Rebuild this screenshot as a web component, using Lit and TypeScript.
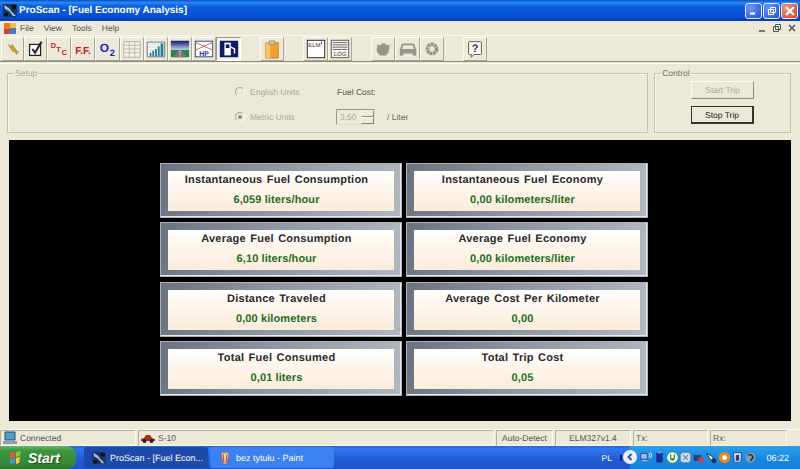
import { LitElement, html, css, svg } from "lit";
import { customElement } from "lit/decorators.js";

const cards = [
  ["Instantaneous Fuel Consumption", "6,059 liters/hour"],
  ["Instantaneous Fuel Economy", "0,00 kilometers/liter"],
  ["Average Fuel Consumption", "6,10 liters/hour"],
  ["Average Fuel Economy", "0,00 kilometers/liter"],
  ["Distance Traveled", "0,00 kilometers"],
  ["Average Cost Per Kilometer", "0,00"],
  ["Total Fuel Consumed", "0,01 liters"],
  ["Total Trip Cost", "0,05"],
];

const appIcon = svg`<path d="M1 2h14v13H1z" fill="#1c3560"/><path d="M2 3l5 3 2 3 5 5-3 0-4-5-4-2z" fill="#9fc4e8"/><path d="M10 3h4v4h-4zM2 11h4v3H2z" fill="#101010"/>`;

const icons: Record<string, unknown> = {
  bolt: svg`<path d="M7 7l4 3 0-3 5 7 2 1-1 1-1 2-3-5-1 2z" fill="#d8a818" stroke="#7a6a20" stroke-width=".6"/>`,
  check: svg`<rect x="5" y="7" width="12" height="12" fill="#fff" stroke="#222" stroke-width="1.4"/><path d="M8 12l3 4 7-12" fill="none" stroke="#222" stroke-width="2.2"/>`,
  dtc: svg`<g font-family="Liberation Sans, sans-serif" font-weight="700" fill="#d81818"><text x="3" y="11" font-size="8">D</text><text x="9" y="15" font-size="8">T</text><text x="15" y="19" font-size="8">C</text></g>`,
  ff: svg`<text x="12" y="17" text-anchor="middle" font-family="Liberation Sans, sans-serif" font-weight="700" font-size="11" fill="#c81818">F.F.</text>`,
  o2: svg`<g font-family="Liberation Sans, sans-serif" font-weight="700" fill="#1426b8"><text x="3" y="15" font-size="13">O</text><text x="14" y="20" font-size="10">2</text></g>`,
  table: svg`<path d="M3 4h18v17H3z" fill="#f4f2e8" stroke="#b0b0a8"/><path d="M3 8h18M3 12h18M3 16h18M9 4v17M15 4v17" stroke="#b8b8b0" fill="none"/>`,
  chart: svg`<path d="M2.500 4.500h19v16h-19z" fill="#f6f8f8" stroke="#6a7078"/><path d="M4 7h16M4 10h16M4 13h16" stroke="#c4ccd0" stroke-width=".7"/><path d="M5 16h2v4H5zM8 14h2v6H8zM11 12h2v8h-2zM14 9h2v11h-2zM17 6h3v14h-3z" fill="#1f7f8f"/>`,
  road: svg`<defs><linearGradient id="sky" x1="0" x2="0" y1="0" y2="1"><stop offset="0" stop-color="#10186c"/><stop offset="1" stop-color="#c4d0ec"/></linearGradient></defs><path d="M2 3h20v10H2z" fill="url(#sky)"/><path d="M2 13h20v8H2z" fill="#2e8448"/><path d="M10 13h4l5 8H5z" fill="#74787c"/><path d="M12 14v7" stroke="#eee" stroke-dasharray="2 1"/>`,
  hp: svg`<rect x="2.500" y="3.500" width="19" height="17" fill="#fff" stroke="#30406c"/><path d="M3 5l18 8M21 5L3 13" stroke="#c85050"/><text x="12" y="19.500" text-anchor="middle" font-family="Liberation Sans, sans-serif" font-weight="700" font-size="7.500" fill="#1c2c9c">HP</text>`,
  pump: svg`<rect x="2" y="3" width="20" height="18" fill="#0c1c64"/><path d="M7 5h7v14H7z" fill="#fff"/><path d="M8.500 7h4v4h-4z" fill="#0c1c64"/><path d="M14 10l4 2v5" fill="none" stroke="#fff" stroke-width="1.500"/>`,
  clip: svg`<path d="M5 5h14v17H5z" fill="#f0a030" stroke="#b87818" stroke-width=".7"/><path d="M5 5h5v17H5z" fill="#f8c468"/><path d="M9 3h6v4H9z" fill="#c8c4b4" stroke="#807c70" stroke-width=".6"/>`,
  elm: svg`<rect x="2.500" y="2.500" width="19" height="19" fill="#fff" stroke="#222"/><text x="3.500" y="9.500" font-family="Liberation Sans, sans-serif" font-size="6.500" fill="#333">ELM</text><path d="M18 4v3" stroke="#333"/>`,
  log: svg`<rect x="2.500" y="2.500" width="19" height="19" fill="#f4f2ea" stroke="#555"/><path d="M4 5h16M4 7.500h16M4 10h16M4 12.500h16" stroke="#666"/><text x="12" y="20" text-anchor="middle" font-family="Liberation Sans, sans-serif" font-size="6.500" fill="#444">LOG</text>`,
  engine: svg`<path d="M6 7l3 1 2-2h3l2 2 3-1 0 5-1 1v3l-3 3H9l-3-3-1-3z" fill="#95958a"/>`,
  car: svg`<path d="M3 13l2-6q1-1 3-1h8q2 0 3 1l2 6v6h-4v-2H7v2H3z" fill="#95958a"/><path d="M7 8h10l1.500 4h-13z" fill="#ece9d8"/>`,
  gear: svg`<circle cx="12" cy="12" r="5" fill="none" stroke="#95958a" stroke-width="4" stroke-dasharray="3 .6"/>`,
  help: svg`<path d="M6 4h12q1 0 1 1v12q0 1-1 1h-7l-3 3v-3H6q-1 0-1-1V5q0-1 1-1z" fill="#f8f8f4" stroke="#555"/><text x="12" y="15.500" text-anchor="middle" font-family="Liberation Sans, sans-serif" font-weight="700" font-size="12" fill="#333">?</text>`,
};

const groups = [
  [["bolt", 23], ["check", 23], ["dtc", 24], ["ff", 24], ["o2", 25], ["table", 24], ["chart", 24], ["road", 24], ["hp", 24], ["pump", 25]],
  [["clip", 24]],
  [["elm", 25], ["log", 24]],
  [["engine", 24], ["car", 25], ["gear", 24]],
  [["help", 24]],
];

const trayIcons = [
  svg`<path d="M1 3h8v7H1z" fill="#9cc0ec" stroke="#24408c"/><path d="M3 12h6" stroke="#dde"/><path d="M11 3q2 2 0 5M13 2q3 3 0 7" stroke="#fff" fill="none"/>`,
  svg`<rect x="4" y="2" width="8" height="12" rx="1" fill="#1c2ca0"/><path d="M6 1h4v2H6z" fill="#8898dc"/>`,
  svg`<circle cx="8" cy="8" r="7" fill="#f4f8f0" stroke="#2a9038"/><path d="M5 4v5q0 3 3 3t3-3V4H9.500v5H6.500V4z" fill="#2a9038"/>`,
  svg`<rect x="2" y="2" width="12" height="12" rx="3" fill="#d4e0f0" stroke="#7490c0"/><path d="M5 5l6 6M11 5l-6 6" stroke="#6888bc" stroke-width="1.500"/>`,
  svg`<path d="M2 5h9v7H2z" fill="#283c80"/><path d="M8 8h6v6H8z" fill="#d04040"/>`,
  svg`<path d="M2 3l6 3 3 4-4 1z" fill="#f4f4f4" stroke="#222"/><circle cx="11" cy="12" r="3" fill="#283058"/>`,
  svg`<circle cx="8" cy="8" r="7" fill="#e88820"/><circle cx="8" cy="8" r="3" fill="#fff"/>`,
  svg`<path d="M3 2h10v3l-1 9H4L3 5z" fill="#c8d4f0" stroke="#283c80"/><path d="M6 5h4v7H6z" fill="#283c80"/>`,
  svg`<circle cx="8" cy="8" r="6" fill="#8a98a8"/><path d="M5 5q5-2 6 3l-3 4" stroke="#23304c" stroke-width="2" fill="none"/>`,
];

@customElement("app-root")
export class AppRoot extends LitElement {
  static styles = css`
    :host {
      display: flex;
      flex-direction: column;
      width: 800px;
      height: 469px;
      overflow: hidden;
      background: #ece9d8;
      color: #222;
      font: 8.500px "Liberation Sans", Arial, sans-serif;
      text-rendering: geometricPrecision;
    }
    .titlebar {
      height: 21px;
      flex: none;
      display: flex;
      align-items: center;
      padding: 0 2px 0 2px;
      color: #fff;
      font-size: 10px;
      font-weight: 700;
      background: linear-gradient(180deg, #0a4fc8 0, #2a86f0 12%, #0a5fe0 30%, #0650d8 75%, #0a3cb0 100%);
    }
    .titlebar svg { margin-right: 1px; }
    .title-text { flex: 1; }
    .win-btns { display: flex; gap: 1px; }
    .win-btn {
      width: 17px;
      height: 16px;
      box-sizing: border-box;
      border: 1px solid #e8eefc;
      border-radius: 3px;
      background: radial-gradient(circle at 30% 30%, #6e98f0, #2050d0);
      display: flex;
      align-items: center;
      justify-content: center;
    }
    .win-btn svg { margin: 0; }
    .win-btn.close { background: radial-gradient(circle at 30% 30%, #ec9a80, #d04020); }
    .menubar {
      height: 15px;
      box-sizing: border-box;
      flex: none;
      display: flex;
      align-items: center;
      padding: 0 0 0 4px;
      gap: 10px;
      color: #555;
      border-bottom: 1px solid #f8f6ec;
    }
    .menu-icon { margin-right: -6px; }
    .mdi-btns {
      margin-left: auto;
      display: flex;
      gap: 5px;
      padding-right: 3px;
    }
    .toolbar {
      height: 26px;
      flex: none;
      box-sizing: border-box;
      display: flex;
      padding: 1px 0 0 1px;
      gap: 19px;
      border-bottom: 1px solid #8f8c7c;
    }
    .tb-group { display: flex; }
    .tb-btn {
      height: 24px;
      box-sizing: border-box;
      display: flex;
      align-items: center;
      justify-content: center;
      border: 1px solid;
      border-color: #fbfaf4 #a8a590 #a8a590 #fbfaf4;
    }
    .tb-btn svg { flex: none; }
    .tb-btn.pressed {
      border-color: #9c9988 #fff #fff #9c9988;
      background: #f5f3e8;
    }
    .top {
      flex: none;
      display: flex;
      gap: 6px;
      margin-top: 1px;
      padding: 4px 9px 0 7px;
      height: 76px;
      box-sizing: border-box;
      border-top: 1px solid #fbfaf2;
    }
    fieldset {
      margin: 0;
      padding: 0;
      min-width: 0;
      height: 65px;
      box-sizing: border-box;
      border: 1px solid #c5c2ae;
      box-shadow: inset 1px 1px #f8f6ec;
    }
    legend {
      margin-left: 6px;
      padding: 0 1px;
      line-height: 10px;
      color: #6a6a60;
    }
    .setup { width: 642px; }
    .setup legend { color: #a8a698; }
    .setup-grid {
      display: grid;
      grid-template-columns: 15px 87px max-content;
      grid-auto-rows: 25px;
      align-items: center;
      padding: 1px 0 0 227px;
      color: #aaa89a;
    }
    .radio {
      width: 10px;
      height: 10px;
      box-sizing: border-box;
      border-radius: 50%;
      border: 1px solid #a8a698;
      border-right-color: #f8f6ec;
      border-bottom-color: #f8f6ec;
      background: #ece9d8;
      display: flex;
      align-items: center;
      justify-content: center;
    }
    .radio i { width: 4px; height: 4px; border-radius: 50%; background: #8c8a7c; }
    .fuel { color: #555; }
    .liter-row { display: flex; align-items: center; color: #666; margin-left: -1px; }
    .spin {
      width: 39px;
      height: 16px;
      box-sizing: border-box;
      margin-right: 12px;
      display: flex;
      border: 1px solid #99968a;
      border-bottom-color: #ddd;
      border-right-color: #ddd;
      background: #ece9d8;
      color: #aaa89a;
      padding-left: 3px;
      line-height: 14px;
    }
    .spin-arrows {
      margin-left: auto;
      width: 13px;
      display: flex;
      flex-direction: column;
    }
    .spin-arrows b {
      flex: 1;
      border: 1px solid;
      border-color: #f8f6ec #8f8c7c #8f8c7c #f8f6ec;
    }
    .control { width: 137px; }
    .ctrl-col {
      display: flex;
      flex-direction: column;
      align-items: flex-end;
      gap: 7px;
      padding: 3px 36px 0 0;
    }
    .btn {
      width: 63px;
      height: 18px;
      box-sizing: border-box;
      display: flex;
      align-items: center;
      justify-content: center;
      color: #222;
      border: 1px solid;
      border-color: #fff #55534a #55534a #fff;
    }
    .btn.off { color: #aaa89a; border-color: #fbfaf4 #8f8c7c #8f8c7c #fbfaf4; }
    .btn.on { border: 1px solid #333; border-right-width: 2px; border-bottom-width: 2px; }
    .panel {
      flex: none;
      height: 281px;
      margin: 1px 9px 0;
      box-sizing: border-box;
      background: #000;
      padding: 23px 0 0 151px;
    }
    .grid {
      display: grid;
      grid-template-columns: 242px 242px;
      grid-auto-rows: 55px;
      gap: 4.330px 4px;
    }
    .card {
      box-sizing: border-box;
      padding: 7px 7px 6px 7px;
      border: 1px solid #aeb2b8;
      background: linear-gradient(100deg, #6a7480 0, #8d96a1 45%, #b2b8c0 100%);
      box-shadow: inset -1px -1px #e8ecf2;
    }
    .card-in {
      height: 100%;
      display: flex;
      flex-direction: column;
      align-items: center;
      padding: 2px 9px 0 0;
      box-sizing: border-box;
      background: linear-gradient(180deg, #fff 0, #fef8f0 30%, #fbecdc 100%);
    }
    .card-title {
      font-size: 11px;
      line-height: 14px;
      font-weight: 700;
      color: #2a2a2a;
      letter-spacing: 0.25px;
      word-spacing: 1px;
      white-space: nowrap;
    }
    .card-value {
      margin-top: 6px;
      font-size: 11px;
      line-height: 14px;
      font-weight: 700;
      color: #1f6e1f;
      letter-spacing: 0.1px;
      white-space: nowrap;
    }
    .status {
      margin-top: 8px;
      flex: none;
      height: 17px;
      box-sizing: border-box;
      display: flex;
      align-items: stretch;
      gap: 2px;
      color: #555;
      border-top: 1px solid #fbfaf2;
    }
    .cell {
      box-sizing: border-box;
      display: flex;
      align-items: center;
      gap: 3px;
      padding-left: 2px;
      border: 1px solid;
      border-color: #b4b1a0 #fbfaf2 #fbfaf2 #b4b1a0;
    }
    .cell.center { justify-content: center; padding: 0; }
    .taskbar {
      flex: none;
      height: 23px;
      display: flex;
      align-items: stretch;
      color: #fff;
      background: linear-gradient(180deg, #2a62d8 0, #2f78ee 12%, #245edb 50%, #1f52c8 100%);
    }
    .start {
      width: 76px;
      box-sizing: border-box;
      display: flex;
      align-items: center;
      gap: 4px;
      padding-left: 8px;
      font: italic 700 14px "Liberation Sans", Arial, sans-serif;
      border-radius: 0 9px 9px 0;
      background: linear-gradient(180deg, #6db36d 0, #3c963c 20%, #358a35 75%, #2b742b 100%);
      text-shadow: 1px 1px 1px #1a4a1a;
    }
    .tasks { display: flex; gap: 2px; padding: 1px 0 1px 8px; flex: 1; }
    .task {
      width: 124px;
      box-sizing: border-box;
      display: flex;
      align-items: center;
      gap: 3px;
      padding-left: 7px;
      font-size: 9px;
      white-space: nowrap;
      border-radius: 3px;
      background: #3c81f0;
    }
    .task.active { background: #1d4aa8; }
    .lang { align-self: center; margin-right: 8px; display: flex; align-items: center; gap: 8px; }
    .lang i { width: 2px; height: 6px; background: #0c2060; }
    .tray {
      width: 170px;
      box-sizing: border-box;
      display: flex;
      align-items: center;
      padding-left: 10px;
      position: relative;
      background: linear-gradient(180deg, #2ea0ec 0, #1a8ae0 50%, #1580d8 100%);
      font-size: 9px;
    }
    .tray > svg { flex: none; }
    .tray-back {
      position: absolute;
      left: -7px;
      top: 4px;
      width: 14px;
      height: 14px;
      border-radius: 50%;
      background: #e8f0fc;
      display: flex;
      align-items: center;
      justify-content: center;
    }
    .clock { margin-left: auto; padding-right: 11px; }
  `;

  render() {
    return html`
      <div class="titlebar">
        <svg width="16" height="17" viewBox="0 0 16 17">${appIcon}</svg>
        <span class="title-text">ProScan - [Fuel Economy Analysis]</span>
        <div class="win-btns">
          <div class="win-btn"><svg width="9" height="9" viewBox="0 0 9 9"><path d="M1 6.500h5v2H1z" fill="#fff"/></svg></div>
          <div class="win-btn"><svg width="10" height="10" viewBox="0 0 10 10"><path d="M3.500 1.500h5v5h-5zM1.500 3.500h5v5h-5z" fill="none" stroke="#fff"/></svg></div>
          <div class="win-btn close"><svg width="10" height="10" viewBox="0 0 10 10"><path d="M1 1l8 8M9 1l-8 8" stroke="#fff" stroke-width="2"/></svg></div>
        </div>
      </div>
      <div class="menubar">
        <svg class="menu-icon" width="12" height="12" viewBox="0 0 12 12"><path d="M0 1h6v6H0z" fill="#e87828"/><path d="M6 1h6v5H6z" fill="#f0c040"/><path d="M0 7h6v5H0z" fill="#c04838"/><path d="M6 6h6v6H6z" fill="#4878c8"/></svg>
        <span>File</span><span>View</span><span>Tools</span><span>Help</span>
        <div class="mdi-btns">
          <svg width="10" height="10" viewBox="0 0 10 10"><path d="M2 8h6" stroke="#555" stroke-width="1.500"/></svg>
          <svg width="10" height="10" viewBox="0 0 10 10"><path d="M3.500 1.500h5v5h-5zM1.500 3.500h5v5h-5z" fill="#ece9d8" stroke="#555"/></svg>
          <svg width="10" height="10" viewBox="0 0 10 10"><path d="M2 2l6 6M8 2l-6 6" stroke="#555" stroke-width="1.500"/></svg>
        </div>
      </div>
      <div class="toolbar">
        ${groups.map(
          (g) => html`<div class="tb-group">
            ${g.map(
              ([name, w]) => html`<div class="tb-btn ${name === "pump" ? "pressed" : ""}" style="width:${w}px">
                <svg width="22" height="22" viewBox="0 0 24 24">${icons[name as string]}</svg>
              </div>`
            )}
          </div>`
        )}
      </div>
      <div class="top">
        <fieldset class="setup">
          <legend>Setup</legend>
          <div class="setup-grid">
            <span class="radio"></span><span>English Units</span><span class="fuel">Fuel Cost:</span>
            <span class="radio"><i></i></span><span>Metric Units</span>
            <span class="liter-row">
              <span class="spin">3,50<span class="spin-arrows"><b></b><b></b></span></span>/ Liter
            </span>
          </div>
        </fieldset>
        <fieldset class="control">
          <legend>Control</legend>
          <div class="ctrl-col">
            <div class="btn off">Start Trip</div>
            <div class="btn on">Stop Trip</div>
          </div>
        </fieldset>
      </div>
      <div class="panel">
        <div class="grid">
          ${cards.map(
            ([title, value]) => html`<div class="card">
              <div class="card-in">
                <span class="card-title">${title}</span>
                <span class="card-value">${value}</span>
              </div>
            </div>`
          )}
        </div>
      </div>
      <div class="status">
        <div class="cell" style="width:136px">
          <svg width="14" height="14" viewBox="0 0 14 14"><path d="M2 1h10v8H2z" fill="#4ea0c8" stroke="#28506c"/><path d="M0 10h14v3H0z" fill="#8ca0ac"/></svg>Connected
        </div>
        <div class="cell" style="width:356px">
          <svg width="14" height="10" viewBox="0 0 14 10"><path d="M0 6l3-1 2-3h4l2 3 3 1v2H0z" fill="#b02818"/><circle cx="3.500" cy="8" r="2" fill="#222"/><circle cx="10.500" cy="8" r="2" fill="#222"/></svg>S-10
        </div>
        <div class="cell center" style="width:57px">Auto-Detect</div>
        <div class="cell center" style="width:76px">ELM327v1.4</div>
        <div class="cell" style="width:75px">Tx:</div>
        <div class="cell" style="width:77px">Rx:</div>
      </div>
      <div class="taskbar">
        <div class="start">
          <svg width="16" height="16" viewBox="0 0 16 16"><path d="M2 3l5-1v5l-5 1z" fill="#e8583c"/><path d="M8 2l5-1-1 5-4 1z" fill="#88c840"/><path d="M2 9l5-1v5l-5 1z" fill="#4890e8"/><path d="M8 8l4-1-1 6-3 1z" fill="#f8d040"/></svg>
          Start
        </div>
        <div class="tasks">
          <div class="task active"><svg width="16" height="16" viewBox="0 0 16 17">${appIcon}</svg>ProScan - [Fuel Econ...</div>
          <div class="task"><svg width="16" height="16" viewBox="0 0 16 16"><path d="M4 2l3 1 3-1 2 2-2 10H6z" fill="#e8d8a0" stroke="#905830" stroke-width=".7"/><path d="M6 4l1 9M10 4l-1 9" stroke="#c83848"/></svg>bez tytułu - Paint</div>
        </div>
        <span class="lang">PL<i></i></span>
        <div class="tray">
          <span class="tray-back"><svg width="8" height="8" viewBox="0 0 8 8"><path d="M5.500 1L2.500 4l3 3" fill="none" stroke="#2050c0" stroke-width="1.800"/></svg></span>
          ${trayIcons.map((t) => html`<svg width="13" height="13" viewBox="0 0 16 16">${t}</svg>`)}
          <span class="clock">06:22</span>
        </div>
      </div>
    `;
  }
}
